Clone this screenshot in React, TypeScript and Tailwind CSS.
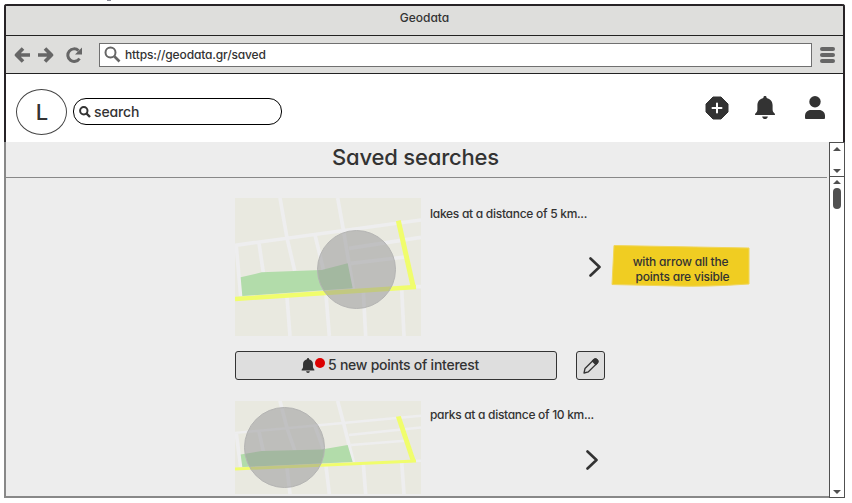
import React from "react";

function Bell({ className }: { className: string }) {
  return (
    <svg viewBox="0 0 20 23" className={className} fill="#333">
      <path d="M10 0c1 0 1.600.6 1.600 1.400v.6c3.700.8 6 3.600 6 7.300v3.900c0 2 .5 2.800 1.600 3.900.6.6.8.9.8 1.400 0 .4-.2.600-.700.600H.7c-.5 0-.7-.2-.7-.6 0-.5.200-.8.800-1.400 1.100-1.100 1.600-1.900 1.600-3.900V9.300c0-3.700 2.300-6.500 6-7.300v-.6C8.400.6 9 0 10 0z" />
      <path d="M7.200 20.400h5.600c-.1 1.500-1.200 2.600-2.800 2.600s-2.700-1.100-2.800-2.600z" />
    </svg>
  );
}

function CityMap({ size, circle }: { size: string; circle: string }) {
  return (
    <div className={`relative w-[186px] shrink-0 ${size}`}>
      <svg viewBox="0 0 558 414" preserveAspectRatio="none" className="block h-full w-full">
        <rect width="558" height="414" fill="#e9e9e0" />
        <g stroke="#eeeeef" strokeWidth="11" fill="none">
          <path d="M0 142L558 66M135 0L156 120L179 218M308 0L325 95L355 273M72 136L85 224M240 111L266 218M342 151L558 118M348 196L510 177M4 145L17 295M156 298L165 414M273 290L283 414M385 280L392 414M500 270L507 414M540 266H558" />
        </g>
        <path d="M17 238L80 223L260 216L338 196L353 271L22 294z" fill="#b2dcaa" />
        <path d="M0 303L543 267" stroke="#f0fd6c" strokeWidth="13" />
        <path d="M490 68L535 268" stroke="#f0fd6c" strokeWidth="15" />
      </svg>
      <div className={`absolute rounded-full border border-[#b4b4b3] bg-[#949496]/50 ${circle}`} />
    </div>
  );
}

function Chevron({ className }: { className: string }) {
  return (
    <svg viewBox="0 0 12 20" className={`h-5 w-3 shrink-0 ${className}`} fill="none" stroke="#333" strokeWidth="2.600" strokeLinecap="round" strokeLinejoin="round">
      <path d="M1.500 1.500L10.500 10L1.500 18.500" />
    </svg>
  );
}

function Arrow({ up = false, className = "" }: { up?: boolean; className?: string }) {
  return (
    <svg viewBox="0 0 8 4" className={`h-1 w-2 shrink-0 ${className}`} fill="#505050">
      <path d={up ? "M0 4L4 0L8 4z" : "M0 0L4 4L8 0z"} />
    </svg>
  );
}

export default function App() {
  return (
    <div className="h-[503px] w-[852px] overflow-hidden bg-white font-['Inter','Liberation_Sans',sans-serif] font-medium text-[#333] [font-feature-settings:'cv11']">
      <div className="h-1 pl-[107px]">
        <div className="h-px w-1 bg-[#8a8a98]" />
      </div>
      <div className="ml-1 flex h-[494px] w-[841px] flex-col overflow-hidden rounded-t-[3px]">
        <div className="flex h-[138px] shrink-0 flex-col border-x-2 border-t-2 border-[#272326]">
          <div className="flex h-[30px] shrink-0 justify-center border-b border-[#222] bg-[#dededc] pt-1 text-[12px] leading-4">
            <span>Geodata</span>
          </div>
          <div className="flex h-[38px] shrink-0 items-center border-b border-[#222] bg-[#dededc]">
            <svg viewBox="0 0 16 16" className="ml-2 h-4 w-4" fill="none" stroke="#666" strokeWidth="3.600" strokeLinejoin="round">
              <path d="M16 8H3M9 1.500L2.500 8L9 14.500" />
            </svg>
            <svg viewBox="0 0 16 16" className="ml-2 h-4 w-4" fill="none" stroke="#666" strokeWidth="3.600" strokeLinejoin="round">
              <path d="M0 8H13M7 1.500L13.500 8L7 14.500" />
            </svg>
            <svg viewBox="0 0 17 16" className="ml-3 h-4 w-[17px]" fill="none" stroke="#666" strokeWidth="3">
              <path d="M13.500 11.500A6.300 6.300 0 1 1 12.500 3.600" />
              <path d="M16 .500V7.500H9z" fill="#666" stroke="none" />
            </svg>
            <div className="ml-4 flex h-6 w-[713px] items-center border border-[#707070] bg-white">
              <svg viewBox="0 0 17 17" className="ml-1 h-[17px] w-[17px]" fill="none" stroke="#666">
                <circle cx="6.500" cy="6.500" r="5" strokeWidth="2" />
                <path d="M10.500 10.500L15.500 15.500" strokeWidth="2.600" />
              </svg>
              <span className="ml-1 pt-px text-[12px] leading-4 tracking-[-0.14px]">https://geodata.gr/saved</span>
            </div>
            <div className="ml-2 flex flex-col gap-[2px]">
              <div className="h-1 w-[15px] rounded-full bg-[#666]" />
              <div className="h-1 w-[15px] rounded-full bg-[#666]" />
              <div className="h-1 w-[15px] rounded-full bg-[#666]" />
            </div>
          </div>
          <div className="flex flex-1 items-start bg-white">
            <div className="ml-[10px] mt-[15px] flex h-[46px] w-[51px] items-center justify-center rounded-[50%] border border-[#444] pl-px text-[22px]">L</div>
            <div className="ml-[6px] mt-6 flex h-[27px] w-[209px] items-center rounded-[13px] border border-black">
              <svg viewBox="0 0 12 12" className="ml-[5px] h-3 w-3" fill="none" stroke="#333" strokeWidth="2">
                <circle cx="4.800" cy="4.800" r="3.700" />
                <path d="M7.500 7.500L11 11" strokeWidth="2.400" />
              </svg>
              <span className="ml-[3px] text-[14px] leading-5 tracking-[-0.15px]">search</span>
            </div>
            <div className="ml-[423px] mt-[22px] flex items-start">
              <svg viewBox="0 0 24 24" className="h-6 w-6">
                <path d="M8 1h8l7 7v8l-7 7H8l-7-7V8z" fill="#333" stroke="#333" strokeWidth="1" strokeLinejoin="round" />
                <path d="M12 7.500v9M7.500 12h9" stroke="white" strokeWidth="2" strokeLinecap="round" />
              </svg>
              <Bell className="ml-[26px] h-[23px] w-5" />
              <svg viewBox="0 0 20 23" className="ml-[30px] h-[23px] w-5" fill="#333">
                <circle cx="10" cy="5.800" r="5.700" />
                <path d="M0 22V20C0 16.500 2.500 14 6 14h8c3.500 0 6 2.500 6 6v2q0 1-1 1H1q-1 0-1-1z" />
              </svg>
            </div>
          </div>
        </div>

        <div className="flex min-h-0 flex-1">
          <div className="flex w-[825px] flex-col border-b-2 border-l-2 border-[#888] bg-[#ededed]">
            <h1 className="mr-[2px] h-9 shrink-0 border-b border-[#888] pr-[2px] text-center text-[22px] font-medium leading-[31px] tracking-[-0.18px]">
              Saved searches
            </h1>
            <div className="flex min-h-0 flex-1 flex-col overflow-hidden pl-[229px] pt-5">
              <div className="flex h-[138px] shrink-0">
                <CityMap size="h-[138px]" circle="left-[82px] top-[32px] h-[79px] w-[79px]" />
                <div className="ml-[9px] flex w-[174px] flex-col pt-2">
                  <span className="whitespace-nowrap text-[12px] leading-4 tracking-[-0.28px]">lakes at a distance of 5 km...</span>
                  <Chevron className="ml-[159px] mt-[35px]" />
                </div>
                <div className="relative ml-[7px] mt-[46px] h-[44px] w-[140px]">
                  <svg viewBox="0 0 140 44" className="absolute inset-0 h-full w-full">
                    <path d="M3 1.500L138 4L138 40Q95 43 65 42L1 40.500z" fill="#f0cd22" stroke="#f0d65b" strokeWidth="1" />
                  </svg>
                  <div className="relative pt-[10px] text-center text-[12px] leading-[15px] tracking-[-0.2px]">
                    <p className="pr-px">with arrow all the</p>
                    <p className="pl-[3px]">points are visible</p>
                  </div>
                </div>
              </div>
              <div className="mt-[15px] flex h-[29px] shrink-0">
                <div className="flex w-[322px] items-center rounded-[3px] border border-[#333] bg-[#dedede]">
                  <Bell className="ml-[65px] h-[15px] w-[14px]" />
                  <div className="mb-[5px] h-[10px] w-[10px] rounded-full bg-[#dc0000]" />
                  <span className="ml-[3px] whitespace-nowrap pb-px text-[14px] leading-5 tracking-[-0.25px]">5 new points of interest</span>
                </div>
                <div className="ml-[19px] flex w-[29px] items-center justify-center rounded-[3px] border border-[#333] bg-[#dedede]">
                  <svg viewBox="0 0 16 16" className="h-4 w-4" fill="none" stroke="#333" strokeWidth="1.300" strokeLinejoin="round">
                    <path d="M1 15L2 10.500L10.800 1.700Q12.500.2 14 1.800Q15.700 3.500 14.200 5.100L5.400 13.800z" />
                    <path d="M9.500 3L11 1.500Q12.500.2 14 1.800Q15.700 3.500 14.200 5.100L12.800 6.500z" fill="#333" />
                  </svg>
                </div>
              </div>
              <div className="mt-[21px] flex h-[93px] shrink-0">
                <CityMap size="h-[93px]" circle="left-[9px] top-[6px] h-[81px] w-[81px]" />
                <div className="ml-[9px] flex flex-col pt-[6px]">
                  <span className="whitespace-nowrap text-[12px] leading-4 tracking-[-0.3px]">parks at a distance of 10 km...</span>
                  <Chevron className="ml-[156px] mt-[27px]" />
                </div>
              </div>
            </div>
          </div>
          <div className="flex w-4 flex-col border-x border-b border-[#505050] bg-white">
            <div className="flex h-[35px] shrink-0 flex-col items-center justify-between border-y border-[#505050] pb-[3px] pt-1">
              <Arrow up />
              <Arrow />
            </div>
            <div className="flex flex-1 flex-col items-center pb-[3px] pt-[3px]">
              <Arrow up />
              <div className="mt-[4px] h-[21px] w-2 rounded-full bg-[#505050]" />
              <Arrow className="mt-auto" />
            </div>
          </div>
        </div>
      </div>
    </div>
  );
}
